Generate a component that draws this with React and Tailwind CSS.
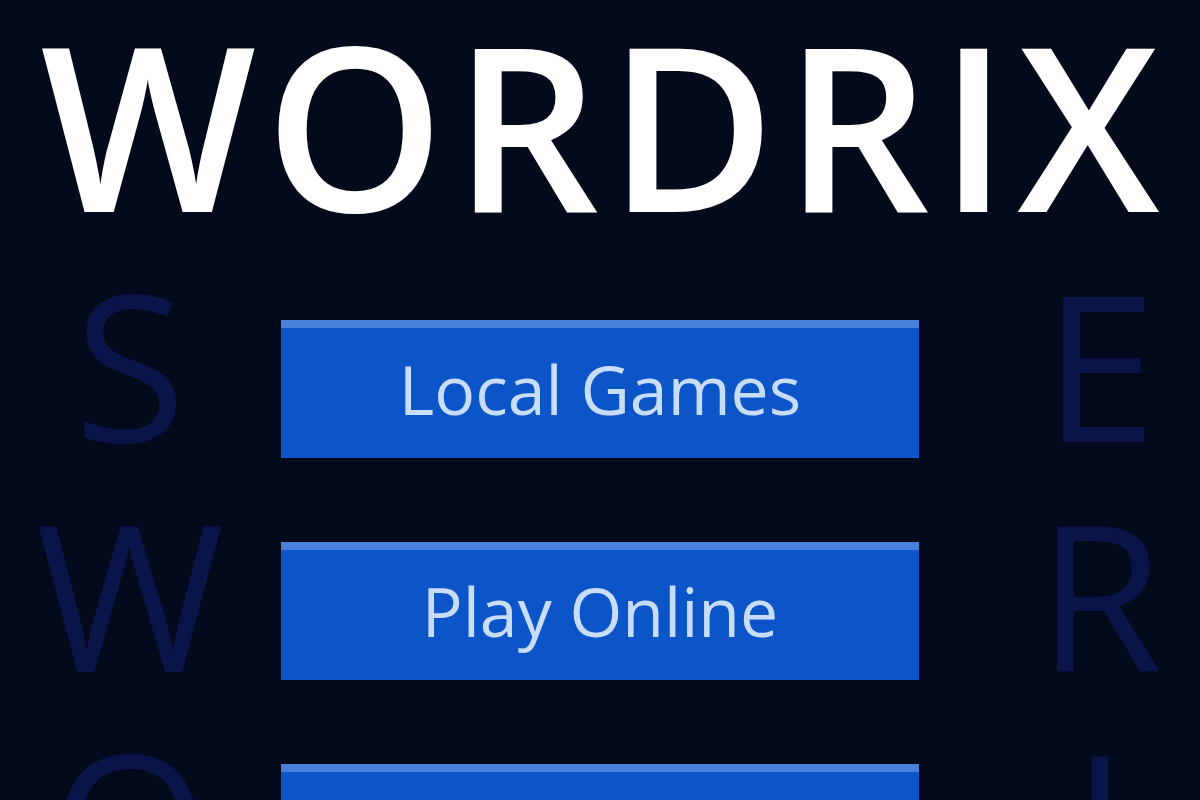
import React from 'react'

const leftLetters = ['S', 'W', 'O']
const rightLetters = ['E', 'R', 'I']
const buttons = ['Local Games', 'Play Online', 'Settings']

export default function App() {
  return (
    <div
      className="relative w-[1200px] h-[800px] overflow-hidden bg-[#020a1b]"
      style={{ fontFamily: '"Open Sans", "Noto Sans", sans-serif' }}
    >
      {/* faint letters in the background */}
      <div className="absolute inset-0 flex justify-between pl-[30px] pt-[248px] pointer-events-none">
        <div className="flex flex-col items-center w-[200px]">
          {leftLetters.map((l) => (
            <span key={l} className="text-[204px] leading-[230px] text-[#0a1449]">{l}</span>
          ))}
        </div>
        <div className="flex flex-col items-center w-[200px]">
          {rightLetters.map((l) => (
            <span key={l} className="text-[204px] leading-[230px] text-[#0a1449]">{l}</span>
          ))}
        </div>
      </div>

      <div className="relative flex flex-col items-center">
        <h1 className="mt-[-26px] pl-[9px] text-[228px] leading-[300px] font-semibold text-white tracking-[9px]">
          WORDRIX
        </h1>
        <div className="mt-[46px] flex flex-col gap-[84px]">
          {buttons.map((b) => (
            <button
              key={b}
              className="w-[638px] h-[138px] bg-[#0b55c9] border-t-[8px] border-[#4a80dc] text-[#c8dcfb] text-[68px] leading-none flex items-center justify-center pb-[8px]"
            >
              {b}
            </button>
          ))}
        </div>
      </div>
    </div>
  )
}
